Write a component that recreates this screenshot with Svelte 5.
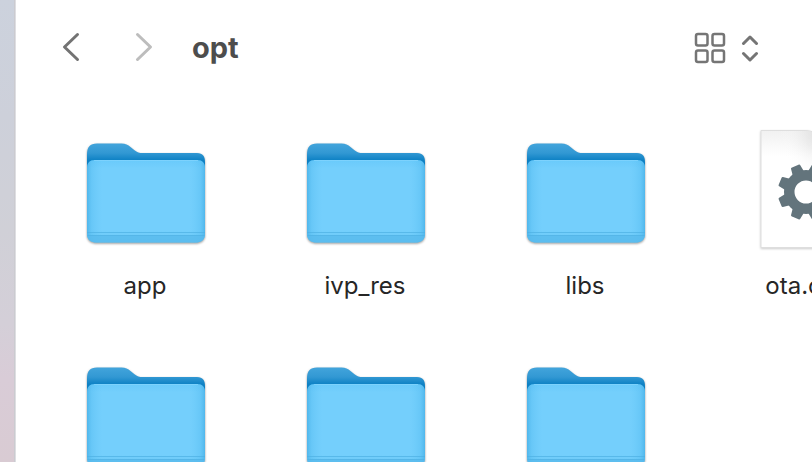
<script>
  const rows = [
    [
      { kind: 'folder', name: 'app' },
      { kind: 'folder', name: 'ivp_res' },
      { kind: 'folder', name: 'libs' },
      { kind: 'file', name: 'ota.cfg' }
    ],
    [
      { kind: 'folder', name: '' },
      { kind: 'folder', name: '' },
      { kind: 'folder', name: '' }
    ]
  ];
  const teeth = [22.5, 67.5, 112.5, 157.5, 202.5, 247.5, 292.5, 337.5];
</script>

<svg class="defs" aria-hidden="true">
  <defs>
    <linearGradient id="back" gradientUnits="userSpaceOnUse" x1="0" y1="18" x2="0" y2="38">
      <stop offset="0" stop-color="#43a5dc" />
      <stop offset="0.5" stop-color="#3298d3" />
      <stop offset="0.85" stop-color="#0f82c5" />
      <stop offset="1" stop-color="#0d7fc2" />
    </linearGradient>
    <linearGradient id="front" x1="0" y1="0" x2="0" y2="1">
      <stop offset="0" stop-color="#69cafb" />
      <stop offset="0.1" stop-color="#74cffc" />
      <stop offset="0.86" stop-color="#74cffc" />
      <stop offset="1" stop-color="#67c6f5" />
    </linearGradient>
    <linearGradient id="sides">
      <stop offset="0" stop-color="#3ca9e2" stop-opacity="0.65" />
      <stop offset="0.04" stop-color="#4ab5ec" stop-opacity="0.3" />
      <stop offset="0.13" stop-color="#5fc4f6" stop-opacity="0" />
      <stop offset="0.87" stop-color="#5fc4f6" stop-opacity="0" />
      <stop offset="0.96" stop-color="#4ab5ec" stop-opacity="0.3" />
      <stop offset="1" stop-color="#3ca9e2" stop-opacity="0.65" />
    </linearGradient>
    <radialGradient id="paper" gradientUnits="userSpaceOnUse" cx="82" cy="10" r="44">
      <stop offset="0" stop-color="#cfcfcf" stop-opacity="0.7" />
      <stop offset="0.4" stop-color="#e2e2e2" stop-opacity="0.5" />
      <stop offset="1" stop-color="#ffffff" stop-opacity="0" />
    </radialGradient>
    <linearGradient id="shade" x1="0" y1="0" x2="0" y2="1">
      <stop offset="0" stop-color="#f1f1f1" />
      <stop offset="0.22" stop-color="#ffffff" />
    </linearGradient>
  </defs>
</svg>

<main class="desktop">
  <section class="window">
    <header>
      <nav>
        <button aria-label="Back">
          <svg width="18" height="30" viewBox="0 0 18 30"><path d="M15.5 2.5 2.5 15l13 12.5" stroke="#737373" /></svg>
        </button>
        <button aria-label="Forward" disabled>
          <svg width="18" height="30" viewBox="0 0 18 30"><path d="m2.5 2.5 13 12.5-13 12.5" stroke="#bdbdbd" /></svg>
        </button>
      </nav>
      <h1>opt</h1>
      <button class="view" aria-label="View as icons">
        <svg width="32" height="32" viewBox="0 0 32 32" stroke="#757575">
          <rect x="2" y="2" width="11.5" height="11.5" rx="2" />
          <rect x="18.5" y="2" width="11.5" height="11.5" rx="2" />
          <rect x="2" y="18.5" width="11.5" height="11.5" rx="2" />
          <rect x="18.5" y="18.5" width="11.5" height="11.5" rx="2" />
        </svg>
        <svg class="arrows" width="18" height="28" viewBox="0 0 18 28" stroke="#757575">
          <path d="m2.500 9.500 6.500-6.500 6.500 6.500M2.500 19.500l6.500 6.500 6.500-6.500" />
        </svg>
      </button>
    </header>

    {#each rows as row}
      <ul>
        {#each row as item}
          <li>
            {#if item.kind === 'folder'}
              <svg class="icon folder" width="128" height="128" viewBox="0 0 128 128" aria-hidden="true">
                <path d="M6 30c0-8 3-11.500 10-11.500h24.500c4 0 6.500 1.500 9 3.500l4 3.200c2.500 2 5 2.800 8 2.800H116c6 0 8 3.500 8 9v20H6z" fill="url(#back)" />
                <path d="M6 44c0-6 2.500-9 8-9h102c5.500 0 8 3 8 9v64c0 6-3 9.500-9 9.500H15c-6 0-9-3.500-9-9.500z" fill="url(#front)" />
                <path d="M6 44c0-6 2.500-9 8-9h102c5.500 0 8 3 8 9v64c0 6-3 9.500-9 9.500H15c-6 0-9-3.500-9-9.500z" fill="url(#sides)" />
                <path d="M6 110.500h118c-.800 4.500-4 7-9 7H15c-5 0-8.200-2.500-9-7z" fill="#58baec" opacity="0.75" />
                <path d="M6 107.500h118M6.500 110.500h117" stroke="#4eb1e4" opacity="0.7" />
                <path d="M13 35.500h104" stroke="#8ad8ff" opacity="0.6" />
              </svg>
            {:else}
              <svg class="icon file" width="128" height="128" viewBox="0 0 128 128" aria-hidden="true">
                <path d="M20 5.500H64c9 0 13 5 16 9l28 28v80H20z" fill="url(#shade)" stroke="#dedede" />
                <path d="M21 6h43c9 0 13 5 16 9l28 28v12H21z" fill="url(#paper)" />
                <g transform="translate(65 67)" fill="#63747c">
                  {#each teeth as angle}
                    <path d="M-6-20-5-27c.2-.8.700-1 1.500-1h7c.8 0 1.300.2 1.500 1l1 7z" transform="rotate({angle})" />
                  {/each}
                  <circle r="16.750" fill="none" stroke="#63747c" stroke-width="10.500" />
                </g>
              </svg>
            {/if}
            <span>{item.name}</span>
          </li>
        {/each}
      </ul>
    {/each}
  </section>
</main>

<style>
  :global(body) {
    margin: 0;
  }
  .defs {
    position: absolute;
    width: 0;
    height: 0;
  }
  .desktop {
    box-sizing: border-box;
    height: 100vh;
    overflow: hidden;
    padding-left: 14px;
    background: linear-gradient(#ccd2dd 0, #cdd0da 25%, #d0d0d7 50%, #d4cfd8 70%, #d9ccd7 82%, #d9cbd3 100%);
    font-family: Inter, 'Liberation Sans', sans-serif;
  }
  .window {
    box-sizing: border-box;
    min-height: 100%;
    border-left: 1px solid #cbcbd0;
    padding-left: 1px;
    background: linear-gradient(90deg, #dedee2 1px, #fff 1px);
    overflow: hidden;
  }
  header {
    display: flex;
    align-items: center;
    height: 94px;
    padding: 0 53px 0 46px;
  }
  nav {
    display: flex;
    gap: 55px;
  }
  button {
    display: flex;
    padding: 0;
    border: 0;
    background: none;
  }
  button svg {
    fill: none;
    stroke-width: 3;
    stroke-linecap: round;
    stroke-linejoin: round;
  }
  .view {
    align-items: center;
    gap: 15px;
    margin-left: auto;
    padding-top: 1px;
  }
  .view svg {
    stroke-width: 2.5;
  }
  .view .arrows {
    stroke-width: 3;
  }
  h1 {
    margin: 0 0 0 39px;
    padding-top: 2px;
    font-size: 29px;
    line-height: 34px;
    font-weight: 700;
    color: #4d4d4d;
  }
  ul {
    display: grid;
    grid-template-columns: repeat(4, 220px);
    height: 224px;
    margin: 0;
    padding: 31px 0 0 19px;
    box-sizing: border-box;
    list-style: none;
  }
  li {
    display: flex;
    flex-direction: column;
    align-items: center;
    gap: 18px;
  }
  .icon {
    flex: none;
  }
  .folder {
    filter: drop-shadow(0 1px 1px #0006);
  }
  .file {
    filter: drop-shadow(0 1px 1px #0003);
  }
  span {
    font-size: 24px;
    line-height: 30px;
    color: #262626;
  }
</style>
